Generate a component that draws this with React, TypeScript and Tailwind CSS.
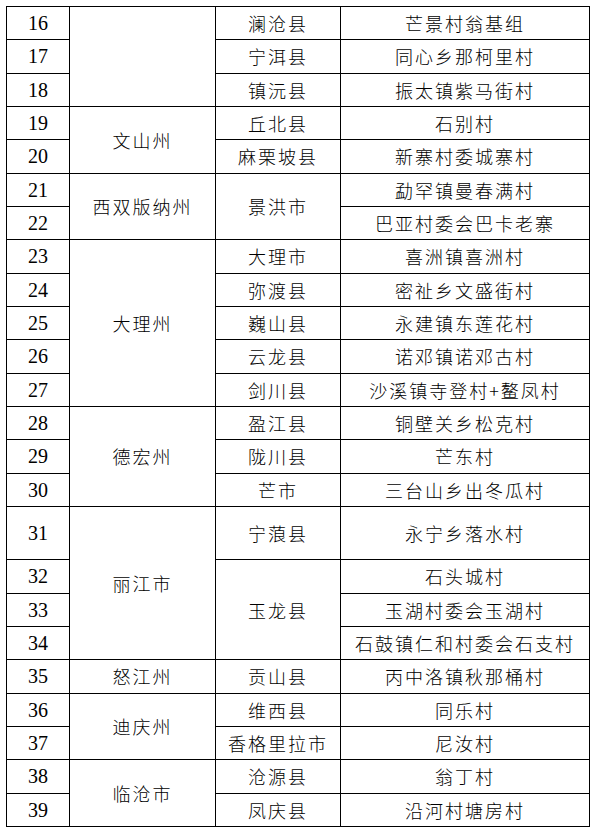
type Row = {
  no: number;
  city?: { name: string; span: number };
  county?: { name: string; span: number };
  village: string;
  tall?: boolean;
};

const rows: Row[] = [
  { no: 16, city: { name: "", span: 3 }, county: { name: "澜沧县", span: 1 }, village: "芒景村翁基组" },
  { no: 17, county: { name: "宁洱县", span: 1 }, village: "同心乡那柯里村" },
  { no: 18, county: { name: "镇沅县", span: 1 }, village: "振太镇紫马街村" },
  { no: 19, city: { name: "文山州", span: 2 }, county: { name: "丘北县", span: 1 }, village: "石别村" },
  { no: 20, county: { name: "麻栗坡县", span: 1 }, village: "新寨村委城寨村" },
  { no: 21, city: { name: "西双版纳州", span: 2 }, county: { name: "景洪市", span: 2 }, village: "勐罕镇曼春满村" },
  { no: 22, village: "巴亚村委会巴卡老寨" },
  { no: 23, city: { name: "大理州", span: 5 }, county: { name: "大理市", span: 1 }, village: "喜洲镇喜洲村" },
  { no: 24, county: { name: "弥渡县", span: 1 }, village: "密祉乡文盛街村" },
  { no: 25, county: { name: "巍山县", span: 1 }, village: "永建镇东莲花村" },
  { no: 26, county: { name: "云龙县", span: 1 }, village: "诺邓镇诺邓古村" },
  { no: 27, county: { name: "剑川县", span: 1 }, village: "沙溪镇寺登村+鳌凤村" },
  { no: 28, city: { name: "德宏州", span: 3 }, county: { name: "盈江县", span: 1 }, village: "铜壁关乡松克村" },
  { no: 29, county: { name: "陇川县", span: 1 }, village: "芒东村" },
  { no: 30, county: { name: "芒市", span: 1 }, village: "三台山乡出冬瓜村" },
  { no: 31, city: { name: "丽江市", span: 4 }, county: { name: "宁蒗县", span: 1 }, village: "永宁乡落水村", tall: true },
  { no: 32, county: { name: "玉龙县", span: 3 }, village: "石头城村" },
  { no: 33, village: "玉湖村委会玉湖村" },
  { no: 34, village: "石鼓镇仁和村委会石支村" },
  { no: 35, city: { name: "怒江州", span: 1 }, county: { name: "贡山县", span: 1 }, village: "丙中洛镇秋那桶村" },
  { no: 36, city: { name: "迪庆州", span: 2 }, county: { name: "维西县", span: 1 }, village: "同乐村" },
  { no: 37, county: { name: "香格里拉市", span: 1 }, village: "尼汝村" },
  { no: 38, city: { name: "临沧市", span: 2 }, county: { name: "沧源县", span: 1 }, village: "翁丁村" },
  { no: 39, county: { name: "凤庆县", span: 1 }, village: "沿河村塘房村" },
];

const cjk = "font-['Noto_Sans_CJK_SC',sans-serif] text-[18px] tracking-[2px] font-light";

export default function App() {
  return (
    <div className="min-h-[830px] w-[595px] bg-white pl-[6px] pt-[6px]">
      <table className="w-[583px] table-fixed border-collapse text-black">
        <colgroup>
          <col className="w-[63px]" />
          <col className="w-[146px]" />
          <col className="w-[125px]" />
          <col className="w-[249px]" />
        </colgroup>
        <tbody>
          {rows.map((r) => (
            <tr key={r.no} className={r.tall ? "h-[53.33px]" : "h-[33.33px]"}>
              <td className="border border-black p-0 text-center align-middle font-['Liberation_Serif',serif] text-[20px] leading-none">
                {r.no}
              </td>
              {r.city && (
                <td rowSpan={r.city.span} className={`border border-black p-0 text-center align-middle leading-none ${cjk}`}>
                  {r.city.name}
                </td>
              )}
              {r.county && (
                <td rowSpan={r.county.span} className={`border border-black p-0 text-center align-middle leading-none ${cjk}`}>
                  {r.county.name}
                </td>
              )}
              <td className={`border border-black p-0 text-center align-middle leading-none ${cjk}`}>
                {r.village}
              </td>
            </tr>
          ))}
        </tbody>
      </table>
    </div>
  );
}
